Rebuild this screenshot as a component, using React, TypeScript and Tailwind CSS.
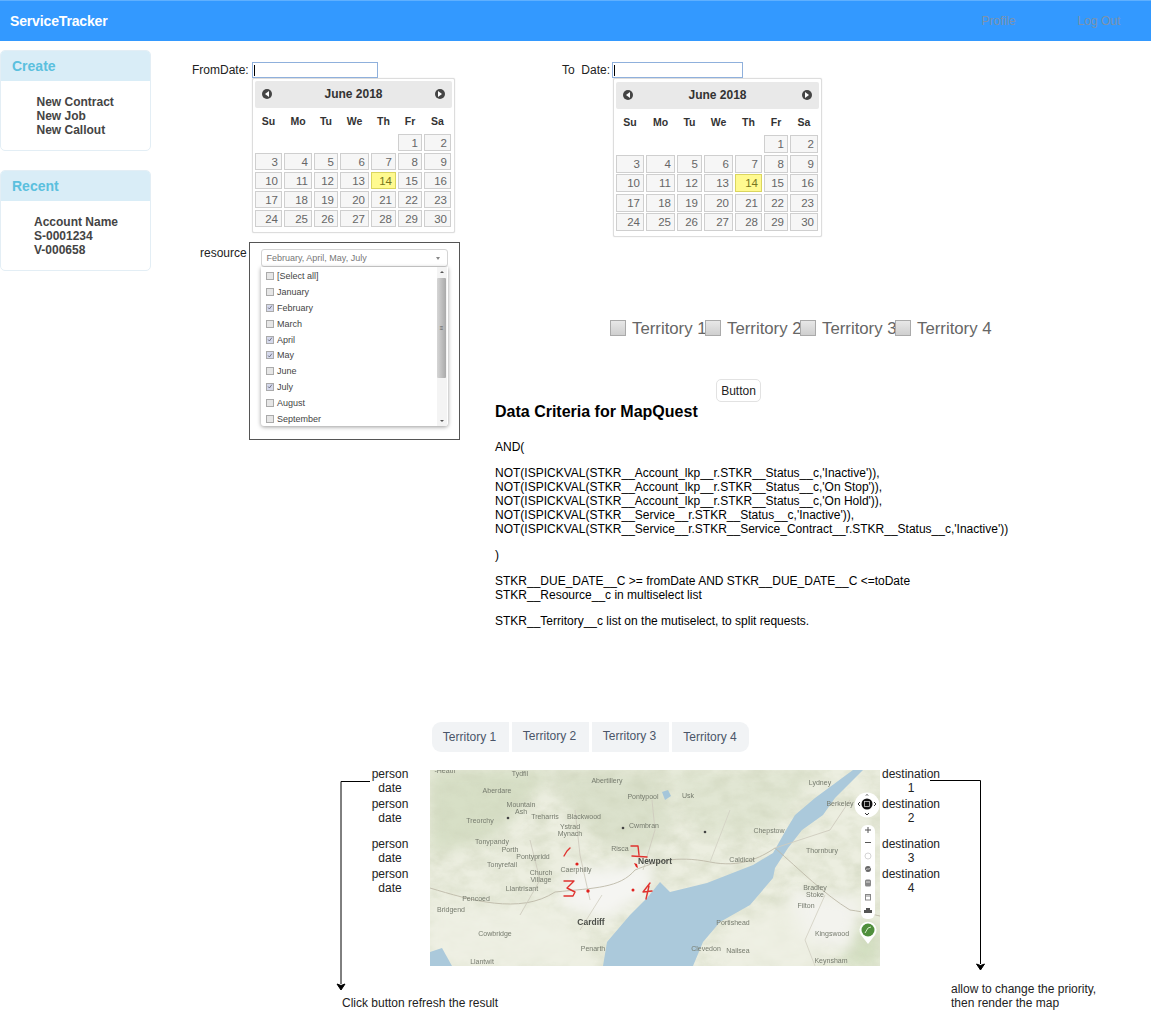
const weekdays = ["Su", "Mo", "Tu", "We", "Th", "Fr", "Sa"];
const days = [
  null, null, null, null, null, 1, 2,
  3, 4, 5, 6, 7, 8, 9,
  10, 11, 12, 13, 14, 15, 16,
  17, 18, 19, 20, 21, 22, 23,
  24, 25, 26, 27, 28, 29, 30,
];
const months = [
  { label: "[Select all]", on: false },
  { label: "January", on: false },
  { label: "February", on: true },
  { label: "March", on: false },
  { label: "April", on: true },
  { label: "May", on: true },
  { label: "June", on: false },
  { label: "July", on: true },
  { label: "August", on: false },
  { label: "September", on: false },
];
const territories = ["Territory 1", "Territory 2", "Territory 3", "Territory 4"];
const rules = [
  "NOT(ISPICKVAL(STKR__Account_lkp__r.STKR__Status__c,'Inactive')),",
  "NOT(ISPICKVAL(STKR__Account_lkp__r.STKR__Status__c,'On Stop')),",
  "NOT(ISPICKVAL(STKR__Account_lkp__r.STKR__Status__c,'On Hold')),",
  "NOT(ISPICKVAL(STKR__Service__r.STKR__Status__c,'Inactive')),",
  "NOT(ISPICKVAL(STKR__Service__r.STKR__Service_Contract__r.STKR__Status__c,'Inactive'))",
];
const mapLabels: [string, number, number][] = [
  ["Aberdare", 67, 23], ["Tydfil", 90, 6], ["Abertillery", 177, 13], ["Pontypool", 213, 29],
  ["Usk", 258, 28], ["Lydney", 390, 15], ["Berkeley", 410, 36], ["Mountain", 91, 37], ["Ash", 91, 43.5],
  ["Treorchy", 50, 53], ["Treharris", 115, 49], ["Blackwood", 154, 49], ["Ystrad", 140, 59], ["Mynach", 140, 65.5],
  ["Cwmbran", 214, 58], ["Chepstow", 339, 63], ["Tonypandy", 62, 74], ["Porth", 80, 82], ["Pontypridd", 103, 89],
  ["Risca", 190, 81], ["Thornbury", 392, 83], ["Tonyrefail", 72, 97], ["Caerphilly", 146, 102],
  ["Caldicot", 312, 92], ["Church", 111, 105], ["Village", 111, 111.5], ["Llantrisant", 92, 121],
  ["Bradley", 385, 120], ["Stoke", 385, 126.5], ["Pencoed", 46, 131], ["Filton", 376, 138], ["Bridgend", 21, 142],
  ["Portishead", 303, 155], ["Cowbridge", 65, 166], ["Kingswood", 402, 166], ["Penarth", 163, 181],
  ["Clevedon", 276, 181], ["Nailsea", 308, 183], ["Keynsham", 401, 193], ["Llantwit", 52, 194],
];

function Calendar({ cols, rowClass, boxClass, cellHeight }: { cols: string; rowClass: string; boxClass: string; cellHeight: string }) {
  return (
    <div className={`rounded-[2px] border border-[#ddd] bg-white px-[2px] pb-[2px] shadow-[0_0_1px_#ccc] ${boxClass}`}>
      <div className="flex h-[27px] items-center justify-between rounded-[2px] bg-[#e9e9e9] px-[7px] pb-[2px]">
        <span className="flex h-[10px] w-[10px] items-center justify-center rounded-full bg-[#444]">
          <span className="h-0 w-0 border-y-[3px] border-r-[4px] border-y-transparent border-r-white" />
        </span>
        <span className="text-[12px] font-bold text-[#333]">June 2018</span>
        <span className="flex h-[10px] w-[10px] items-center justify-center rounded-full bg-[#444]">
          <span className="h-0 w-0 border-y-[3px] border-l-[4px] border-y-transparent border-l-white" />
        </span>
      </div>
      <div className={`grid gap-x-[2px] ${cols} mt-[3px] h-[19px] items-center`}>
        {weekdays.map((d) => (
          <span key={d} className="text-center text-[10.5px] font-bold text-[#333]">{d}</span>
        ))}
      </div>
      <div className={`grid gap-x-[2px] ${cols} ${rowClass} mt-[4px]`}>
        {days.map((d, i) =>
          d === null ? (
            <span key={i} />
          ) : (
            <span
              key={i}
              className={`${cellHeight} border pr-[3px] text-right text-[11.5px] leading-[16px] ${
                d === 14 ? "border-[#dad55e] bg-[#fffa90] text-[#777620]" : "border-[#cfcfcf] bg-[#f6f6f6] text-[#666]"
              }`}
            >
              {d}
            </span>
          ),
        )}
      </div>
    </div>
  );
}

function MapPicture() {
  return (
    <svg viewBox="0 0 450 196" className="mt-[3px] h-[196px] w-[450px] shrink-0 bg-[#eceee0]">
      <defs>
        <filter id="soft">
          <feGaussianBlur stdDeviation="7" />
        </filter>
        <filter id="softer">
          <feGaussianBlur stdDeviation="0.3" />
        </filter>
        <filter id="terrain" x="0" y="0" width="100%" height="100%">
          <feTurbulence type="fractalNoise" baseFrequency="0.05 0.08" numOctaves="4" seed="7" />
          <feColorMatrix values="0 0 0 0 0.62  0 0 0 0 0.66  0 0 0 0 0.5  1.6 1.2 0 0 -1.05" />
        </filter>
      </defs>
      <g filter="url(#soft)">
        <path d="M0 0H120L100 30 60 70 0 85Z" fill="#d7dfc6" />
        <path d="M110 0H230L245 55 210 85 165 70 140 40Z" fill="#dbe1cc" />
        <path d="M235 0H390L340 60 290 70 255 50Z" fill="#e1e6d3" />
        <path d="M420 160L450 150V196H410Z" fill="#d3dfc1" />
      </g>
      <rect width="450" height="196" filter="url(#terrain)" opacity="0.5" />
      <g filter="url(#soft)">
        <path d="M140 100L225 95 215 125 175 150 130 135Z" fill="#f5f5f2" />
        <path d="M360 120L430 130 420 180 370 170Z" fill="#f3f3ee" />
        <path d="M0 135L130 140 170 196H0Z" fill="#eff0e5" opacity="0.8" />
        <path d="M290 165L360 130 400 196H280Z" fill="#eff0e5" opacity="0.8" />
      </g>
      <g filter="url(#softer)">
        <path
          d="M173 196L177 172 200 145 217 128 230 112 240 122 277 113 323 95 343 83 356 60 365 45 385 28 423 0H433L405 28 393 45 372 60 358 78 345 98 343 108 320 135 290 152 273 172 263 196Z"
          fill="#abc9db"
        />
        <path d="M0 182L12 178 22 196H0Z" fill="#abc9db" />
        <path d="M232 22L238 20 241 26 235 30Z" fill="#a5c6da" />
        <g fill="none" stroke="#bdb9a8" strokeWidth="0.9">
          <path d="M0 118C40 130 90 145 125 122 165 118 190 118 205 100 225 92 245 85 280 92 310 98 330 88 345 78 370 100 395 125 420 140 435 142 445 145 450 146" />
          <path d="M213 100L225 60 222 30M160 130L150 85 145 40M90 145L110 110 100 70M345 78L400 60 420 30" stroke="#cfccbe" />
          <path d="M395 125L375 170 385 196M280 92L300 40M150 160L172 125" stroke="#d5d2c5" />
        </g>
      </g>
      <g fontFamily="'Liberation Sans', sans-serif" fontSize="7" fill="#767b6e" textAnchor="middle" filter="url(#softer)">
        <text x="15" y="3">-Heath</text>
        {mapLabels.map(([t, x, y]) => (
          <text key={`${t}${x}`} x={x} y={y}>{t}</text>
        ))}
        <text x="225" y="94" fontSize="8.5" fontWeight="700" fill="#4c4f49">Newport</text>
        <text x="161" y="155" fontSize="8.5" fontWeight="700" fill="#4c4f49">Cardiff</text>
      </g>
      <g fill="#444">
        <circle cx="78" cy="48" r="1.3" />
        <circle cx="193" cy="58" r="1.3" />
        <circle cx="275" cy="62" r="1.3" />
      </g>
      <g fill="none" stroke="#e0322e" strokeWidth="1.4" strokeLinecap="round" strokeLinejoin="round">
        <path d="M134 86L137 81 140 78" />
        <path d="M201 76H208L209 85M202 86L217 87" />
        <path d="M134 111H144L137 118 145 122 143 126 134 126" />
        <path d="M220 113L213 122 222 121M219 116L216 129" />
      </g>
      <g fill="#e0221e">
        <circle cx="147" cy="94" r="1.6" />
        <circle cx="158" cy="121" r="1.7" />
        <circle cx="203" cy="120" r="1.5" />
        <path d="M204 93L207 94 208 98 206 97Z" />
      </g>
      <circle cx="437" cy="35" r="12.5" fill="#fff" />
      <circle cx="437" cy="34" r="5.5" fill="#111" />
      <rect x="434.5" y="31.5" width="5" height="5" fill="none" stroke="#ccc" strokeWidth="0.8" />
      <path d="M430 32L428 34 430 36M444 32L446 34 444 36M435 43L437 45 439 43M436 25.5L437 24.5 438 25.5" fill="none" stroke="#333" />
      <rect x="431" y="55" width="14" height="94" rx="6" fill="#fff" />
      <g stroke="#555" strokeWidth="1" fill="none">
        <path d="M435 60H441M438 57V63M435 72.5H441" />
        <circle cx="438" cy="86" r="3" stroke="#d4d4d4" />
        <circle cx="438" cy="99" r="3" fill="#666" stroke="none" />
        <path d="M435 101C437 97 439 101 441 97" stroke="#fff" strokeWidth="0.7" />
        <rect x="435" y="109.5" width="6" height="7" rx="1.5" fill="#888" stroke="none" />
        <path d="M436 112H440" stroke="#fff" strokeWidth="0.7" />
        <rect x="435.5" y="124.5" width="5" height="5.5" stroke="#888" />
        <path d="M435.5 126H440.5" stroke="#888" />
        <path d="M436 138H440V140H442V143H434V140H436Z" fill="#555" stroke="none" />
      </g>
      <path d="M438 174L431 165A8.5 8.5 0 1 1 445 165Z" fill="#fff" />
      <circle cx="438" cy="160" r="6.5" fill="#4f8f3c" />
      <path d="M435 163L438 158 441 157" stroke="#d7eccb" fill="none" />
    </svg>
  );
}

export default function App() {
  return (
    <div className="relative h-[1015px] w-[1151px] overflow-hidden bg-white font-['Liberation_Sans',sans-serif] text-[12px] leading-[14px] text-black">
      <header className="flex h-[41px] items-center border-t border-[#5fb0ff] bg-[#3399ff] pl-[10px]">
        <span className="text-[14px] font-bold tracking-[-0.15px] text-white">ServiceTracker</span>
        <span className="ml-[874px] text-[12px] text-[#7c93ac]">Profile</span>
        <span className="ml-[62px] text-[12px] text-[#7c93ac]">Log Out</span>
      </header>

      <div className="flex">
        <aside className="w-[151px] shrink-0 pt-[9px]">
          <div className="h-[101px] overflow-hidden rounded-[5px] border border-[#e3eef5]">
            <h3 className="flex h-[30px] items-center bg-[#d9edf7] pl-[11px] text-[14px] font-bold text-[#5bc0de]">Create</h3>
            <div className="pl-[35.5px] pt-[14px] font-bold text-[#444]">
              <p>New Contract</p>
              <p>New Job</p>
              <p>New Callout</p>
            </div>
          </div>
          <div className="mt-[19px] h-[101px] overflow-hidden rounded-[5px] border border-[#e3eef5]">
            <h3 className="flex h-[30px] items-center bg-[#d9edf7] pl-[11px] text-[14px] font-bold text-[#5bc0de]">Recent</h3>
            <div className="pl-[33px] pt-[14px] font-bold text-[#444]">
              <p>Account Name</p>
              <p>S-0001234</p>
              <p>V-000658</p>
            </div>
          </div>
        </aside>

        <main className="min-w-0 flex-1 pt-[21px]">
          <div className="flex pl-[41px]">
            <div className="w-[303px] shrink-0">
              <div className="flex h-[16px] items-center">
                <span className="w-[60px] text-[#222]">FromDate:</span>
                <span className="flex h-[16px] w-[126px] items-center border border-[#8fb0dc] pl-[1px]">
                  <span className="h-[11px] w-px bg-black" />
                </span>
              </div>
              <div className="ml-[60px]">
                <Calendar
                  cols="grid-cols-[27px_28px_24px_29px_25px_24px_27px]"
                  rowClass="gap-y-[2px]"
                  boxClass="h-[155px] w-[203px] pt-[2px]"
                  cellHeight="h-[17px]"
                />
              </div>
              <div className="mt-[9px] flex">
                <span className="ml-[8px] mt-[4px] w-[49px] text-[#222]">resource</span>
                <div className="h-[198px] w-[211px] border border-[#555] pl-[10.5px] pt-[6px]">
                  <div className="flex h-[18px] w-[187px] items-center justify-between rounded-[3px] border border-[#d4d4d4] pl-[5px] pr-[7px] text-[9px] text-[#777]">
                    <span>February, April, May, July</span>
                    <span className="h-0 w-0 border-x-[2px] border-t-[3px] border-x-transparent border-t-[#888]" />
                  </div>
                  <div className="flex h-[159px] w-[187px] justify-between overflow-hidden rounded-b-[3px] bg-white pr-[1px] shadow-[0_1px_4px_rgba(0,0,0,0.4)]">
                    <ul className="pl-[5.5px] pt-[1.5px]">
                      {months.map((m) => (
                        <li key={m.label} className="flex h-[15.8px] items-center gap-[3px] text-[9px] text-[#444]">
                          <span
                            className={`flex h-[8px] w-[8px] items-center justify-center border border-[#aaa] ${
                              m.on ? "bg-[#d5d9ec]" : "bg-[#e6e6e6]"
                            }`}
                          >
                            {m.on && (
                              <svg viewBox="0 0 8 8" className="h-[7px] w-[7px]">
                                <path d="M1.5 4L3.2 6 6.5 1.5" fill="none" stroke="#556" strokeWidth="1" />
                              </svg>
                            )}
                          </span>
                          {m.label}
                        </li>
                      ))}
                    </ul>
                    <div className="flex w-[10px] flex-col items-center bg-[#f4f4f4]">
                      <span className="mt-[4px] h-0 w-0 border-x-[2px] border-b-[2px] border-x-transparent border-b-[#555]" />
                      <div className="mt-[5px] flex h-[100px] w-[9px] items-center justify-center rounded-[1px] bg-gradient-to-r from-[#d6d6d6] to-[#aaa]">
                        <span className="text-[6px] text-[#555]">≡</span>
                      </div>
                      <span className="mt-auto mb-[4px] h-0 w-0 border-x-[2px] border-t-[2px] border-x-transparent border-t-[#555]" />
                    </div>
                  </div>
                </div>
              </div>
            </div>

            <div className="min-w-0 flex-1">
              <div className="flex h-[16px] items-center pl-[67px]">
                <span className="w-[50px] whitespace-pre text-[#222]">To  Date:</span>
                <span className="flex h-[16px] w-[131px] items-center border border-[#8fb0dc] pl-[1px]">
                  <span className="h-[11px] w-px bg-black" />
                </span>
              </div>
              <div className="ml-[118px]">
                <Calendar
                  cols="grid-cols-[28px_29px_25px_29px_27px_24px_28px]"
                  rowClass="gap-y-[1.5px]"
                  boxClass="h-[159px] w-[209px] pt-[3px]"
                  cellHeight="h-[18px]"
                />
              </div>
              <div className="mt-[83px] flex pl-[115px]">
                {territories.map((t) => (
                  <label key={t} className="flex h-[16px] w-[95px] shrink-0 items-center whitespace-nowrap text-[16.8px] text-[#666]">
                    <span className="mr-[6px] h-[16px] w-[16px] shrink-0 border border-[#aaa] bg-gradient-to-b from-[#e8e8e8] to-[#cfcfcf]" />
                    <span className="pt-[2px]">{t}</span>
                  </label>
                ))}
              </div>
              <button className="ml-[221px] mt-[43px] block h-[23px] w-[45px] rounded-[5px] border border-[#e2e2e2] bg-white text-[12px] text-[#222]">
                Button
              </button>
              <h2 className="mt-px text-[16px] font-bold leading-[18px]">Data Criteria for MapQuest</h2>
              <p className="mt-[19px]">AND(</p>
              <div className="mt-[12px]">
                {rules.map((r) => (
                  <p key={r}>{r}</p>
                ))}
              </div>
              <p className="mt-[12px]">)</p>
              <div className="mt-[12px]">
                <p>STKR__DUE_DATE__C &gt;= fromDate AND STKR__DUE_DATE__C &lt;=toDate</p>
                <p>STKR__Resource__c in multiselect list</p>
              </div>
              <p className="mt-[12px]">STKR__Territory__c list on the mutiselect, to split requests.</p>
            </div>
          </div>

          <div className="ml-[281px] mt-[94px] flex h-[30px] gap-[3px] text-[#4a5568]">
            <span className="flex w-[77px] items-center justify-center rounded-l-[9px] bg-[#f1f3f5] pr-[2px]">Territory 1</span>
            <span className="flex w-[77px] items-center justify-center bg-[#f1f3f5] pb-[2px] pr-[2px]">Territory 2</span>
            <span className="flex w-[77px] items-center justify-center bg-[#f1f3f5] pb-[2px] pr-[2px]">Territory 3</span>
            <span className="flex w-[77px] items-center justify-center rounded-r-[9px] bg-[#f1f3f5] pr-[1px]">Territory 4</span>
          </div>

          <div className="ml-[209px] mt-[15px] flex text-center text-[#222]">
            <div className="w-[60px] shrink-0">
              <p>person<br />date</p>
              <p className="mt-[2px]">person<br />date</p>
              <p className="mt-[12px]">person<br />date</p>
              <p className="mt-[2px]">person<br />date</p>
            </div>
            <div className="ml-[10px]">
              <MapPicture />
            </div>
            <div className="w-[62px] shrink-0">
              <p>destination<br />1</p>
              <p className="mt-[2px]">destination<br />2</p>
              <p className="mt-[12px]">destination<br />3</p>
              <p className="mt-[2px]">destination<br />4</p>
            </div>
          </div>

          <div className="ml-[191px] flex text-[#222]">
            <p className="mt-[30px] w-[609px] shrink-0">Click button refresh the result</p>
            <p className="mt-[16px] whitespace-nowrap">allow to change the priority,<br />then render the map</p>
          </div>
        </main>
      </div>

      {/* hand drawn connector arrows from the wireframe */}
      <svg className="pointer-events-none absolute left-0 top-0 h-[1015px] w-[1151px]" viewBox="0 0 1151 1015">
        <path d="M370 781.5H341V984" fill="none" stroke="#000" />
        <path d="M337 984L341 990 345 984 341 985.5Z" fill="#000" stroke="#000" />
        <path d="M930 780.5H980.5V964" fill="none" stroke="#000" />
        <path d="M976.5 964L980.5 970 984.5 964 980.5 965.5Z" fill="#000" stroke="#000" />
      </svg>
    </div>
  );
}
